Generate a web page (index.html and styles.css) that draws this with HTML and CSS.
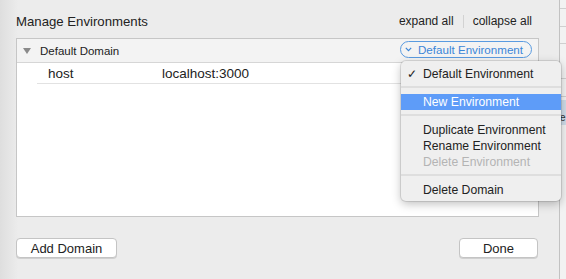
FILE: index.html
```html
<!DOCTYPE html>
<html>
<head>
<meta name="viewport" content="width=device-width, initial-scale=1.0">
<title>Manage Environments</title>
<link rel="stylesheet" href="styles.css">
</head>
<body>

<div class="sheet">
    <div class="sheet-head">
        <span class="title">Manage Environments</span>
        <div class="links">
            <span>expand all</span>
            <span class="sep"></span>
            <span>collapse all</span>
        </div>
    </div>

    <div class="box">
        <div class="domain-head">
            <div class="domain-name">
                <svg class="disclosure" width="8" height="6" viewBox="0 0 8 6"><polygon points="0,0 8,0 4,6" fill="#8a8a8a"/></svg>
                <span>Default Domain</span>
            </div>
            <div class="pill">
                <svg class="chev" width="7" height="5" viewBox="0 0 7 5"><polyline points="0.8,0.8 3.5,3.6 6.2,0.8" fill="none" stroke="#3b86d8" stroke-width="1.2"/></svg>
                <span>Default Environment</span>
            </div>
        </div>
        <div class="var-row">
            <span class="var-key">host</span>
            <span class="var-val">localhost:3000</span>
        </div>
    </div>

    <div class="footer">
        <button class="btn add">Add Domain</button>
        <button class="btn done">Done</button>
    </div>
</div>

<div class="aside">
    <div class="aside-lines"></div>
    <div class="aside-sel">e</div>
</div>

<div class="menu">
    <div class="item"><span class="tick">&#10003;</span>Default Environment</div>
    <div class="menu-sep"></div>
    <div class="item active"><span class="tick"></span>New Environment</div>
    <div class="menu-sep"></div>
    <div class="item"><span class="tick"></span>Duplicate Environment</div>
    <div class="item"><span class="tick"></span>Rename Environment</div>
    <div class="item disabled"><span class="tick"></span>Delete Environment</div>
    <div class="menu-sep"></div>
    <div class="item"><span class="tick"></span>Delete Domain</div>
</div>

</body>
</html>
```

FILE: styles.css
```css
body {
    margin: 0;
    width: 566px;
    height: 279px;
    display: flex;
    overflow: hidden;
    font-family: "Liberation Sans", Arial, sans-serif;
    color: #222;
    background: #ececec;
}

.sheet {
    width: 543px;
    height: 279px;
    padding-left: 16px;
    border-right: 1px solid #c2c2c2;
    background: linear-gradient(90deg, #dedede 0, #ececec 18px);
    display: flex;
    flex-direction: column;
}

.sheet-head {
    width: 523px;
    height: 16px;
    margin-top: 13px;
    display: flex;
    align-items: center;
    justify-content: space-between;
}
.title {
    font-size: 13.2px;
}
.links {
    display: flex;
    align-items: center;
    font-size: 12px;
    margin-right: 7px;
}
.links .sep {
    width: 1px;
    height: 13px;
    background: #d2d2d2;
    margin: 0 9px;
}

.box {
    width: 521px;
    height: 177px;
    margin-top: 9px;
    border: 1px solid #c6c6c6;
    background: #fff;
}

.domain-head {
    height: 24px;
    box-sizing: border-box;
    border-bottom: 1px solid #d6d6d6;
    background: #f3f3f3;
    display: flex;
    align-items: center;
    justify-content: space-between;
}
.domain-name {
    display: flex;
    align-items: center;
    font-size: 11.5px;
    padding-left: 6px;
}
.disclosure {
    margin-right: 9px;
}
.pill {
    height: 15px;
    margin-right: 6px;
    margin-bottom: 3px;
    padding: 0 8px 0 4px;
    border: 1px solid #5a9be0;
    border-radius: 9px;
    color: #3b86d8;
    font-size: 11.6px;
    display: flex;
    align-items: center;
}
.chev {
    margin-right: 6px;
}

.var-row {
    height: 20px;
    margin-left: 20px;
    border-bottom: 1px solid #e2e2e2;
    display: flex;
    align-items: center;
    font-size: 13.5px;
}
.var-key {
    width: 114px;
    padding-left: 11px;
}

.footer {
    width: 523px;
    margin-top: 21px;
    display: flex;
    justify-content: space-between;
}
.btn {
    height: 20px;
    padding: 0;
    border: 1px solid #c4c4c4;
    border-radius: 4px;
    background: #fff;
    box-shadow: 0 1px 0 #d0d0d0;
    font-family: "Liberation Sans", Arial, sans-serif;
    font-size: 13px;
    color: #222;
}
.add {
    width: 101px;
}
.done {
    width: 79px;
    margin-right: 1px;
}

.aside {
    flex: 1;
    background: #f2f2f2;
    overflow: hidden;
}
.aside-lines {
    height: 100px;
    background: repeating-linear-gradient(180deg, #f2f2f2 0, #f2f2f2 8px, #cfcfcf 8px, #cfcfcf 9px, #f2f2f2 9px, #f2f2f2 17.5px);
}
.aside-sel {
    height: 25px;
    background: #cfdce8;
    font-size: 10px;
    line-height: 36px;
    color: #333;
}

.menu {
    position: absolute;
    left: 401px;
    top: 61px;
    width: 160px;
    padding: 5px 0 3px;
    border-radius: 5px;
    background: #efefef;
    box-shadow: 0 0 0 1px rgba(0, 0, 0, 0.1), 0 3px 10px rgba(0, 0, 0, 0.25);
    font-size: 12.2px;
}
.item {
    height: 16px;
    display: flex;
    align-items: center;
    color: #222;
}
.item.active {
    background: #5e9cf8;
    color: #fff;
}
.item.disabled {
    color: #b4b4b4;
}
.tick {
    width: 22px;
    padding-left: 6px;
    box-sizing: border-box;
    font-size: 12px;
}
.menu-sep {
    height: 2px;
    margin: 4px 0 6px;
    background: #dedede;
}
```
